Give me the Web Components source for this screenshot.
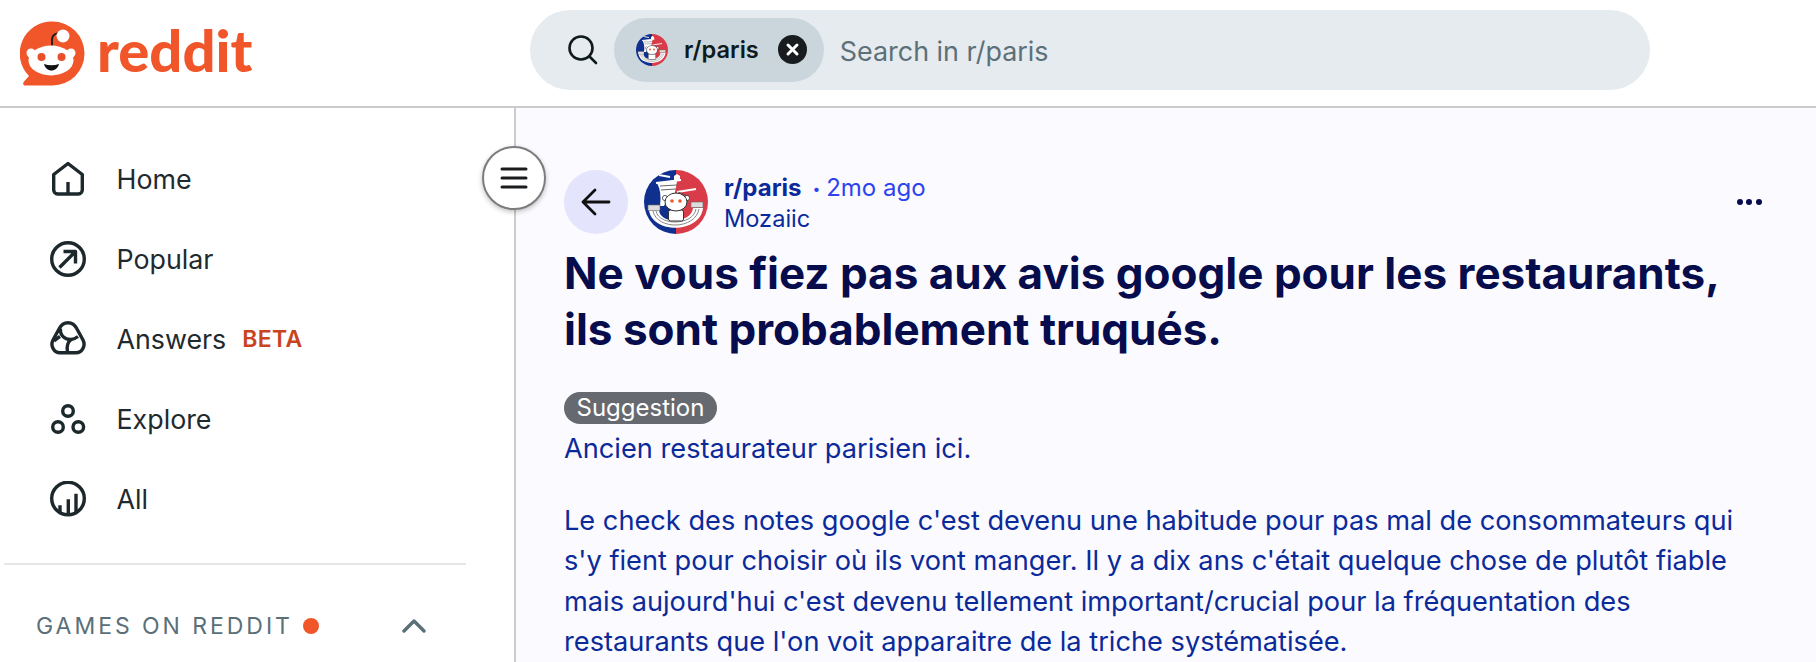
<!DOCTYPE html>
<html>
<head>
<meta charset="utf-8">
<style>
  html, body { margin: 0; height: 662px; overflow: hidden; background: #fff; font-family: Inter, "Liberation Sans", sans-serif; }
</style>
</head>
<body>
<r-app>
  <r-header slot="header"></r-header>
  <r-sidebar slot="sidebar">
    <r-nav-item label="Home" icon="home"></r-nav-item>
    <r-nav-item label="Popular" icon="popular"></r-nav-item>
    <r-nav-item label="Answers" icon="answers" badge="BETA"></r-nav-item>
    <r-nav-item label="Explore" icon="explore"></r-nav-item>
    <r-nav-item label="All" icon="all"></r-nav-item>
  </r-sidebar>
  <r-post slot="main">
    <p>Ancien restaurateur parisien ici.</p>
    <p>Le check des notes google c'est devenu une habitude pour pas mal de consommateurs qui s'y fient pour choisir où ils vont manger. Il y a dix ans c'était quelque chose de plutôt fiable mais aujourd'hui c'est devenu tellement important/crucial pour la fréquentation des restaurants que l'on voit apparaitre de la triche systématisée.</p>
  </r-post>
</r-app>
<script>
(function() {
  const icons = {
    home: `<path d="M3.7 29V13.5L18 2.5L32.3 13.5V29a4 4 0 0 1-4 4H7.7a4 4 0 0 1-4-4Z"/><path d="M18 33V21"/>`,
    popular: `<circle cx="18" cy="18" r="16.3"/><path d="M9.5 26.5L25 11M13.5 10.5H25.5V22.5"/>`,
    answers: `<path d="M18 1.7C23 1.7 25.5 5 27 8L33 19C36 25 32 31.7 26 31.7H10C4 31.7 0 25 3 19L9 8C10.5 5 13 1.7 18 1.7Z"/><path d="M10.5 7.5C9.5 14 15 19 21 18.5C24 18.3 26 17 28 15.5"/><path d="M21 18.5C18 21 16.5 26 17.5 31"/><path d="M10 15.5C7.5 17 5.5 18.5 4 20"/>`,
    explore: `<circle cx="18" cy="10" r="5.3"/><circle cx="8" cy="26" r="5.3"/><circle cx="28.3" cy="26" r="5.3"/>`,
    all: `<circle cx="18" cy="17.5" r="16.3"/><path d="M10 31V24.3M18.3 33V18.3M26 31V12.7"/>`
  }

  class RApp extends HTMLElement {
    constructor() {
      super()
      const shadow = this.attachShadow({ mode: 'open' })
      shadow.innerHTML = `
        <style>
          :host { display: flex; flex-direction: column; width: 1816px; height: 662px; overflow: hidden; color: #1a1a1b; }
          .body { flex: 1; display: flex; min-height: 0; position: relative; }
          .toggle {
            position: absolute; left: 482px; top: 38px; width: 60px; height: 60px;
            box-sizing: content-box; border: 2px solid #7c7c7c; border-radius: 50%; background: #fff;
            box-shadow: 0 2px 5px rgba(0,0,0,.25);
            display: flex; align-items: center; justify-content: center;
          }
        </style>
        <slot name="header"></slot>
        <div class="body">
          <slot name="sidebar"></slot>
          <slot name="main"></slot>
          <div class="toggle">
            <svg width="28" height="24" viewBox="0 0 28 24" fill="none" stroke="#1a1c1e" stroke-width="3" stroke-linecap="round"><path d="M2 3H26M2 12H26M2 21H26"/></svg>
          </div>
        </div>
      `
    }
  }

  class RHeader extends HTMLElement {
    constructor() {
      super()
      const shadow = this.attachShadow({ mode: 'open' })
      shadow.innerHTML = `
        <style>
          :host { display: flex; align-items: center; flex: none; height: 106px; border-bottom: 2px solid #cbcbcb; background: #fff; }
          .logo { display: flex; align-items: center; width: 530px; padding-left: 20px; box-sizing: border-box; gap: 14px; }
          .word { font: 900 58px/1 Lato, sans-serif; color: #f0562a; position: relative; top: -3px; left: -2px; }
          .search {
            width: 1120px; height: 80px; border-radius: 40px; background: #e5ebee; margin-top: -7px;
            display: flex; align-items: center; box-sizing: border-box; padding-left: 37px;
          }
          .chip {
            display: flex; align-items: center; height: 64px; border-radius: 32px; background: #cbd6dc;
            margin-left: 15px; padding: 0 17px 0 22px; font: 600 23.6px Inter, sans-serif; color: #0f1a1c;
          }
          .chip span { margin-left: 16px; margin-right: 19px; }
          .hint { margin-left: 16px; font: 400 26.9px Inter, sans-serif; color: #5d7079; position: relative; top: 1px; }
        </style>
        <div class="logo">
          <svg width="65" height="65" viewBox="0 0 65 65">
            <path d="M32.5 0.5A32 32 0 1 1 32.5 64.5H5.5C3 64.5 2.5 62 4 60.5L9 55A32 32 0 0 1 32.5 0.5Z" fill="#f0562a"/>
            <path d="M32 24V19C32 14 35 12 41 12.5" fill="none" stroke="#1a1a1a" stroke-width="1.8" stroke-linecap="round"/>
            <circle cx="43" cy="15" r="6.5" fill="#fff"/>
            <circle cx="11" cy="32" r="4.5" fill="#fff"/>
            <circle cx="51" cy="32" r="4.5" fill="#fff"/>
            <ellipse cx="31" cy="39.5" rx="22.5" ry="15" fill="#fff"/>
            <circle cx="21.5" cy="36" r="4" fill="#e8502a"/>
            <circle cx="41.5" cy="36" r="4" fill="#e8502a"/>
            <path d="M24 43Q31.5 45.5 39 43C38 47 35 49.5 31.5 49.5S25 47 24 43Z" fill="#111"/>
          </svg>
          <span class="word">reddit</span>
        </div>
        <div class="search">
          <svg width="32" height="32" viewBox="0 0 32 32" fill="none" stroke="#0f1a1c" stroke-width="2.6" stroke-linecap="round"><circle cx="14" cy="14" r="11.5"/><path d="M23 23L29 29"/></svg>
          <div class="chip">
            <r-avatar size="32"></r-avatar>
            <span>r/paris</span>
            <svg width="29" height="29" viewBox="0 0 29 29"><circle cx="14.5" cy="14.5" r="14.5" fill="#181c1f"/><path d="M10 10L19 19M19 10L10 19" stroke="#fff" stroke-width="3" stroke-linecap="round"/></svg>
          </div>
          <div class="hint">Search in r/paris</div>
        </div>
      `
    }
  }

  class RAvatar extends HTMLElement {
    constructor() {
      super()
      const shadow = this.attachShadow({ mode: 'open' })
      const size = this.getAttribute('size') || 64
      shadow.innerHTML = `
        <style>:host { display: block; flex: none; line-height: 0; }</style>
        <svg width="${size}" height="${size}" viewBox="0 0 64 64">
          <defs><clipPath id="c"><circle cx="32" cy="32" r="32"/></clipPath></defs>
          <g clip-path="url(#c)">
            <rect width="32" height="64" fill="#10308f"/>
            <rect x="32" width="32" height="64" fill="#d93c48"/>
            <path d="M13 13L33 11L31 24Q24 26 20 36H16Q18 22 13 13Z" fill="#fff"/>
            <path d="M30 6L33 4L36 6V11H30Z" fill="#fff"/>
            <path d="M15 5L26 7M33 22L52 19M12 13L37 10" stroke="#fff" stroke-width="1.8" fill="none"/>
            <path d="M16 16L33 15M17 20L32 19M34 22L44 26" stroke="#555" stroke-width=".9" fill="none"/>
            <path d="M5 40C8 64 56 64 59 38H49C48 53 16 55 15 40Z" fill="#fff"/>
            <path d="M9 41C13 60 51 60 55 39M12 41C15 56 49 56 52 39" stroke="#888" stroke-width="1" fill="none"/>
            <rect x="4" y="35" width="12" height="5.5" fill="#ddd" stroke="#666" stroke-width=".6"/>
            <rect x="47" y="32" width="12" height="5.5" fill="#ddd" stroke="#666" stroke-width=".6"/>
            <rect x="24.5" y="40" width="15" height="11" rx="2" fill="#fff" stroke="#333" stroke-width="1"/>
            <circle cx="21" cy="28" r="2.6" fill="#fff" stroke="#333" stroke-width=".8"/>
            <circle cx="43" cy="28" r="2.6" fill="#fff" stroke="#333" stroke-width=".8"/>
            <ellipse cx="32" cy="32" rx="11" ry="9" fill="#fff" stroke="#333" stroke-width="1"/>
            <circle cx="28" cy="31" r="1.8" fill="#f0562a"/>
            <circle cx="36" cy="31" r="1.8" fill="#f0562a"/>
          </g>
        </svg>
      `
    }
  }

  class RNavItem extends HTMLElement {
    constructor() {
      super()
      const shadow = this.attachShadow({ mode: 'open' })
      const badge = this.getAttribute('badge')
      shadow.innerHTML = `
        <style>
          :host { display: flex; align-items: center; height: 80px; padding-left: 50px; color: #1f2a2f; font-size: 26.8px; }
          svg { flex: none; }
          .label { margin-left: 30.5px; }
          .badge { margin-left: 16px; font-size: 23px; font-weight: 600; color: #c9431f; letter-spacing: .3px; }
        </style>
        <svg width="36" height="36" viewBox="0 0 36 36" fill="none" stroke="#1c282c" stroke-width="3.4" stroke-linejoin="round">${icons[this.getAttribute('icon')]}</svg>
        <span class="label">${this.getAttribute('label')}</span>
        ${badge ? `<span class="badge">${badge}</span>` : ''}
      `
    }
  }

  class RSidebar extends HTMLElement {
    constructor() {
      super()
      const shadow = this.attachShadow({ mode: 'open' })
      shadow.innerHTML = `
        <style>
          :host { display: block; flex: none; width: 516px; box-sizing: border-box; border-right: 2px solid #cbcbcb; padding-top: 31px; background: #fff; }
          .rule { height: 2px; background: #e6e6e6; margin: 24px 48px 0 4px; }
          .games { display: flex; align-items: center; padding: 45px 0 0 36px; color: #5a6f78; font-size: 23px; letter-spacing: 2.95px; line-height: 32px; }
          .dot { width: 16px; height: 16px; border-radius: 50%; background: #f0562a; margin-left: 10px; }
          svg { margin-left: 83px; }
        </style>
        <slot></slot>
        <div class="rule"></div>
        <div class="games">
          <span>GAMES ON REDDIT</span><span class="dot"></span>
          <svg width="24" height="14" viewBox="0 0 24 14" fill="none" stroke="#5a6f78" stroke-width="3.4" stroke-linecap="round" stroke-linejoin="round"><path d="M2 12L12 2L22 12"/></svg>
        </div>
      `
    }
  }

  class RPost extends HTMLElement {
    constructor() {
      super()
      const shadow = this.attachShadow({ mode: 'open' })
      shadow.innerHTML = `
        <style>
          :host { display: block; flex: 1; min-width: 0; background: #fbfaff; padding: 62px 0 0 48px; box-sizing: border-box; overflow: hidden; }
          .meta { display: flex; align-items: center; height: 64px; width: 1198px; }
          .back { flex: none; width: 64px; height: 64px; border-radius: 50%; background: #e4e4fd; display: flex; align-items: center; justify-content: center; }
          r-avatar { margin-left: 16px; }
          .who { margin-left: 16px; font-size: 23.6px; line-height: 30px; color: #0b2a9a; flex: 1; padding-top: 2px; }
          .who b { font-weight: 700; font-size: 24px; }
          .who .time { color: #2b44ec; font-size: 24px; margin-left: 11px; }
          .who .dot { font-size: 14px; vertical-align: 2px; margin-right: -1px; }
          .more { display: flex; gap: 3.6px; padding-right: 0; }
          .more i { width: 6px; height: 6px; border-radius: 50%; background: #070c4d; }
          h1 { margin: 11px 0 0; font-size: 44px; line-height: 56px; font-weight: 700; color: #070c4d; }
          .flair { display: inline-block; margin-top: 35px; height: 32px; line-height: 32px; padding: 0 12.5px; border-radius: 16px; background: #666a70; color: #fff; font-size: 24px; vertical-align: top; }
          .text { width: 1204px; font-size: 27.2px; line-height: 40.2px; color: #0b2a9a; margin-top: 5px; }
          ::slotted(p) { margin: 0 0 32px; }
        </style>
        <div class="meta">
          <div class="back"><svg width="30" height="28" viewBox="0 0 30 28" fill="none" stroke="#111" stroke-width="2.8" stroke-linecap="round" stroke-linejoin="round"><path d="M28 14H2M14 2L2 14L14 26"/></svg></div>
          <r-avatar size="64"></r-avatar>
          <div class="who">
            <div><b>r/paris</b><span class="time"><span class="dot">•</span> 2mo ago</span></div>
            <div>Mozaiic</div>
          </div>
          <div class="more"><i></i><i></i><i></i></div>
        </div>
        <h1>Ne vous fiez pas aux avis google pour les restaurants,<br>ils sont probablement truqués.</h1>
        <div class="flair">Suggestion</div>
        <div class="text"><slot></slot></div>
      `
    }
  }

  customElements.define('r-avatar', RAvatar)
  customElements.define('r-app', RApp)
  customElements.define('r-header', RHeader)
  customElements.define('r-nav-item', RNavItem)
  customElements.define('r-sidebar', RSidebar)
  customElements.define('r-post', RPost)
})()
</script>
</body>
</html>
